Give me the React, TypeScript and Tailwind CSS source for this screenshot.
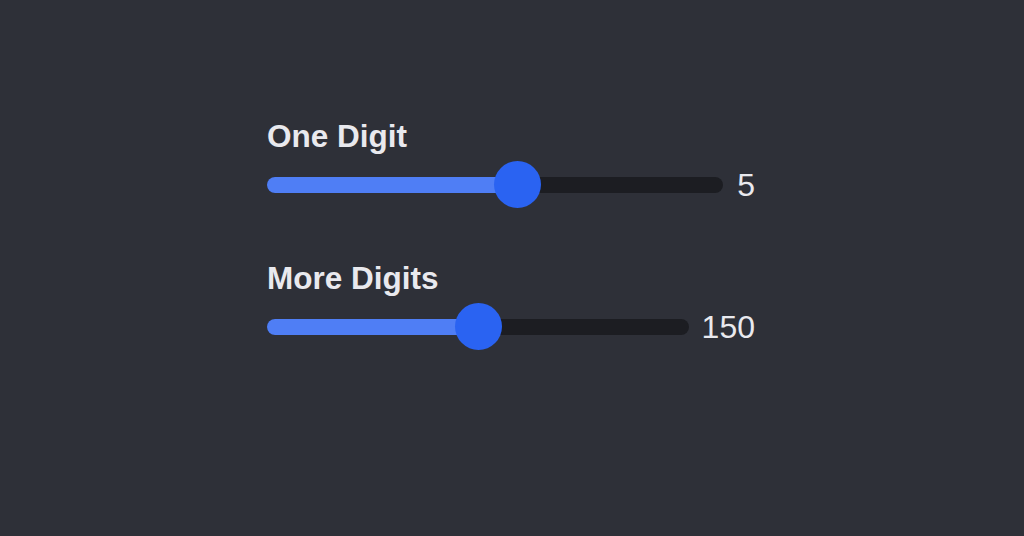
import React from 'react';

interface SliderRowProps {
  label: string;
  value: number;
  min: number;
  max: number;
  trackWidth: number;
}

const THUMB = 47;

const SliderRow: React.FC<SliderRowProps> = ({ label, value, min, max, trackWidth }) => {
  const frac = (value - min) / (max - min);
  const center = THUMB / 2 + frac * (trackWidth - THUMB);

  return (
    <div className="flex flex-col">
      <div className="text-[31.5px] leading-[30px] font-bold text-[#e9e9ee]">{label}</div>
      <div className="mt-[10px] flex items-center justify-between h-[47px]">
        <div className="relative h-[47px] flex items-center" style={{ width: trackWidth }}>
          <div className="h-4 w-full rounded-full bg-[#1c1d22] overflow-hidden">
            <div className="h-full bg-[#4f7ef5]" style={{ width: center }} />
          </div>
          <div
            className="absolute top-0 w-[47px] h-[47px] rounded-full bg-[#2a63f2]"
            style={{ left: center - THUMB / 2 }}
          />
        </div>
        <span className="text-[32px] leading-[30px] text-[#e9e9ee]">{value}</span>
      </div>
    </div>
  );
};

export default function App() {
  return (
    <div
      className="w-[1024px] h-[536px] bg-[#2e3038] pt-[121px]"
      style={{ fontFamily: '"Liberation Sans", Arial, sans-serif' }}
    >
      <div className="ml-[267px] w-[488px] flex flex-col gap-[55px]">
        <SliderRow label="One Digit" value={5} min={0} max={9} trackWidth={456} />
        <SliderRow label="More Digits" value={150} min={0} max={300} trackWidth={422} />
      </div>
    </div>
  );
}
